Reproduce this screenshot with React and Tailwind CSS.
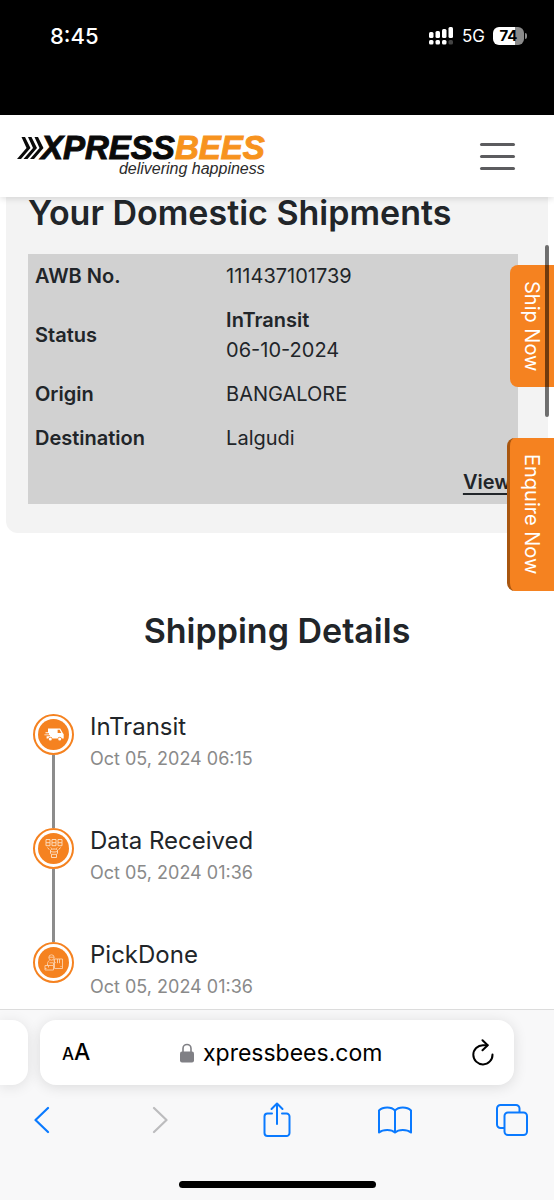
import { useState } from "react";

const shipment = {
    awb: "111437101739",
    status: "InTransit",
    statusDate: "06-10-2024",
    origin: "BANGALORE",
    destination: "Lalgudi",
};

const events = [
    { title: "InTransit", time: "Oct 05, 2024 06:15", Icon: VanIcon },
    { title: "Data Received", time: "Oct 05, 2024 01:36", Icon: DataIcon },
    { title: "PickDone", time: "Oct 05, 2024 01:36", Icon: PickupIcon },
];

function VanIcon() {
    return (
        <svg viewBox="0 0 20 13" className="w-5 h-[13px]" fill="#fff" aria-hidden="true">
            <path d="M4 .5h12.2l2.6 4.6.9 1.2v4.2h-1.9a2.1 2.1 0 0 0-4.1 0H8.4a2.1 2.1 0 0 0-4.1 0H2.6V8.2H6V7.3H.5l-.2-.9H5V5.3H1.5V4.2H4z" />
            <path d="M13.6 1.8h2l1.700 3.200h-3.700z" fill="#f58220" />
            <circle cx="6.3" cy="11" r="1.5" />
            <circle cx="15.7" cy="11" r="1.5" />
        </svg>
    );
}

function DataIcon() {
    return (
        <svg viewBox="0 0 18 21" className="w-[18px] h-[21px]" fill="none" stroke="#fde3cb" strokeWidth=".9" aria-hidden="true">
            <path d="M1 1.5h4v3.2H1zM7 1.5h4v3.2H7zM13 1.5h4v3.2h-4z" />
            <path d="M1 4.7v3h4v-3M7 4.7v3h4v-3M13 4.7v3h4v-3" />
            <path d="M2.5 9.5l1.8 2.2M15.5 9.5l-1.8 2.2M5.8 9.5l.8 1.2M12.2 9.5l-.8 1.2" />
            <path d="M5.5 12.5c0-1 1.5-1.5 3.5-1.5s3.5.5 3.5 1.5-1.5 1.5-3.5 1.5-3.5-.5-3.5-1.5zM5.5 12.5v2.8l1 1v3.2h5v-3.2l1-1v-2.8M6.5 16.3h5" />
        </svg>
    );
}

function PickupIcon() {
    return (
        <svg viewBox="0 0 20 17" className="w-5 h-[17px]" fill="none" stroke="#fcd3ae" strokeWidth=".9" aria-hidden="true">
            <circle cx="7.5" cy="3.5" r="2.7" />
            <path d="M5 3.2h5M5.5 6.5c-1.8.8-2.2 2.5-2 5M9.5 6.5l2 2.5" />
            <path d="M10.5 5h8v9.5h-8zM13.5 5v4.2M15.5 5v4.2M16.5 12.5h1" />
            <path d="M1 11.5h8.5V16H1zM5.5 8.8h4v2.7M4.5 11.5v2M1 14.5h1.5" />
        </svg>
    );
}

function StatusBar() {
    return (
        <div className="h-[115px] bg-black text-white flex items-start justify-between pl-[50px] pr-[27px] pt-6">
            <span className="text-[22px] leading-6 font-medium">8:45</span>
            <div className="flex items-center h-6 gap-2">
                <svg viewBox="0 0 25 18" className="w-[25px] h-[18px]" fill="#fff" aria-hidden="true">
                    <rect x="0" y="5" width="4.5" height="6" rx="1.5" />
                    <rect x="6.5" y="4" width="4.5" height="7" rx="1.5" />
                    <rect x="13" y="2" width="4.5" height="9" rx="1.5" />
                    <rect x="19.5" y="0" width="4.5" height="11" rx="1.5" />
                    <rect x="0" y="13" width="4.5" height="4.5" rx="1.5" />
                    <rect x="6.5" y="13" width="4.5" height="4.5" rx="1.5" />
                    <rect x="13" y="13" width="4.5" height="4.5" rx="1.5" />
                    <rect x="19.5" y="13" width="4.5" height="4.5" rx="1.5" fill="#444" />
                </svg>
                <span className="text-[17px] leading-6">5G</span>
                <div className="flex items-center gap-px">
                    <div className="w-[31px] h-[18px] rounded-[6px] bg-linear-to-r from-white from-72% to-[#8a8a8a] to-72% text-black text-[15px] leading-[18px] font-bold text-center">
                        74
                    </div>
                    <div className="w-[2px] h-[6px] rounded-r-full bg-[#8a8a8a]" />
                </div>
            </div>
        </div>
    );
}

function Logo() {
    return (
        <a href="/" aria-label="XpressBees home" className="flex flex-col items-end font-['Liberation_Sans',sans-serif] italic">
            <span className="flex items-center text-[33px] leading-6 font-bold">
                <svg viewBox="0 0 28 22" className="w-7 h-[22px] -mr-1" fill="#0a0a0a" aria-hidden="true">
                    <path d="M4.5 0H8l5.500 11L4 22H0l9.500-11z" />
                    <path d="M11 0h3.500L20 11l-9.500 11h-4L16 11z" />
                    <path d="M17.500 0H21l5.500 11L17 22h-4l9.500-11z" />
                </svg>
                <span className="text-[#0a0a0a] [-webkit-text-stroke:1px_#0a0a0a]">XPRESS</span>
                <span className="text-[#f7931e] [-webkit-text-stroke:1px_#f7931e]">BEES</span>
            </span>
            <span className="mt-px text-base leading-4 text-[#2b2b2b]">delivering happiness</span>
        </a>
    );
}

function Header() {
    const [open, setOpen] = useState(false);

    return (
        <header className="relative z-10 h-[82px] bg-white flex items-center justify-between pl-[17px] pr-[39px] shadow-[0_2px_6px_rgba(0,0,0,0.12)]">
            <Logo />
            <button
                type="button"
                aria-label="Menu"
                aria-expanded={open}
                onClick={() => setOpen(!open)}
                className="flex flex-col gap-[9px]"
            >
                <span className="w-[35px] h-[3px] rounded-full bg-[#5c5c5f]" />
                <span className="w-[35px] h-[3px] rounded-full bg-[#5c5c5f]" />
                <span className="w-[35px] h-[3px] rounded-full bg-[#5c5c5f]" />
            </button>
        </header>
    );
}

function ShipmentCard() {
    return (
        <section className="mx-[6px] pl-[22px] pr-[30px] pb-[29px] bg-[#f3f3f3] rounded-b-xl">
            <h1 className="text-[34px] leading-8 font-semibold whitespace-nowrap">Your Domestic Shipments</h1>
            <table className="mt-[25px] w-full table-fixed bg-[#d1d1d1] text-xl leading-[30px] text-left">
                <tbody>
                    <tr>
                        <th scope="row" className="w-[39%] p-[7px] font-semibold">AWB No.</th>
                        <td className="p-[7px]">{shipment.awb}</td>
                    </tr>
                    <tr>
                        <th scope="row" className="p-[7px] font-semibold">Status</th>
                        <td className="p-[7px]">
                            <strong className="block font-semibold">{shipment.status}</strong>
                            {shipment.statusDate}
                        </td>
                    </tr>
                    <tr>
                        <th scope="row" className="p-[7px] font-semibold">Origin</th>
                        <td className="p-[7px]">{shipment.origin}</td>
                    </tr>
                    <tr>
                        <th scope="row" className="p-[7px] font-semibold">Destination</th>
                        <td className="p-[7px]">{shipment.destination}</td>
                    </tr>
                    <tr>
                        <td colSpan={2} className="p-[7px] text-right">
                            <a href="#details" className="font-semibold underline underline-offset-4">View</a>
                        </td>
                    </tr>
                </tbody>
            </table>
        </section>
    );
}

function Timeline() {
    return (
        <section id="details" className="pt-[78px] px-[33px]">
            <h2 className="text-[34px] leading-10 font-semibold text-center">Shipping Details</h2>
            <ol className="mt-[63px]">
                {events.map(({ title, time, Icon }, i) => (
                    <li key={title} className="flex gap-4">
                        <div className="flex flex-col items-center">
                            <div className="w-[41px] h-[41px] rounded-full border-2 border-[#f58220] bg-white p-[3px]">
                                <div className="w-full h-full rounded-full bg-[#f58220] flex items-center justify-center">
                                    <Icon />
                                </div>
                            </div>
                            {i < events.length - 1 && <div className="w-[3px] h-[73px] bg-[#8c8c8c]" />}
                        </div>
                        <div>
                            <h3 className="text-2xl leading-[26px]">{title}</h3>
                            <p className="mt-[5px] text-lg leading-7 text-[#8a8a8a]">{time}</p>
                        </div>
                    </li>
                ))}
            </ol>
        </section>
    );
}

function SideTabs() {
    return (
        <div className="absolute z-20 right-0 top-[68px] flex flex-col items-end gap-[51px] text-xl text-white">
            <button type="button" className="w-11 h-[122px] rounded-l-lg bg-[#f58220] [writing-mode:vertical-rl] text-center">
                Ship Now
            </button>
            <button
                type="button"
                className="w-[47px] h-[153px] rounded-l-lg border-l-3 border-[#a9560f] bg-[#f58220] [writing-mode:vertical-rl] text-center"
            >
                Enquire Now
            </button>
        </div>
    );
}

function BrowserBar() {
    return (
        <footer className="relative z-20 bg-[#f8f8f9] border-t border-[#dcdcdc] pt-[10px] pb-3 overflow-hidden">
            <div className="flex gap-3">
                <div className="w-7 h-[65px] rounded-r-2xl bg-white shadow-[0_2px_14px_rgba(0,0,0,0.1)]" />
                <div className="flex-1 h-[65px] mr-10 pl-[22px] pr-5 rounded-2xl bg-white shadow-[0_2px_14px_rgba(0,0,0,0.12)] flex items-center justify-between text-black">
                    <button type="button" aria-label="Page settings" className="flex items-baseline font-medium">
                        <span className="text-[17px]">A</span>
                        <span className="text-[23px]">A</span>
                    </button>
                    <label className="flex items-center gap-[9px]">
                        <svg viewBox="0 0 14 20" className="w-[14px] h-5" aria-label="Secure">
                            <rect x="0" y="8.5" width="14" height="11" rx="2" fill="#808085" />
                            <path d="M3 9V5.5a4 4 0 0 1 8 0V9" fill="none" stroke="#808085" strokeWidth="1.6" />
                        </svg>
                        <input
                            type="text"
                            aria-label="Address"
                            defaultValue="xpressbees.com"
                            className="field-sizing-content text-[23px] leading-8 outline-none"
                        />
                    </label>
                    <button type="button" aria-label="Reload">
                        <svg viewBox="0 0 22 27" className="w-[22px] h-[27px]" fill="none" stroke="#000" strokeWidth="2" strokeLinecap="round" strokeLinejoin="round">
                            <path d="M20.5 15.5A9.6 9.6 0 1 1 11 6.2h4.500" />
                            <path d="M10.5 1.2l5.200 5-5.200 5" />
                        </svg>
                    </button>
                </div>
            </div>
            <nav className="mt-[17px] px-[26px] flex justify-between text-[#0a7aff]">
                <button type="button" aria-label="Back" className="w-8 h-9 flex items-center justify-center">
                    <svg viewBox="0 0 16 28" className="w-4 h-7" fill="none" stroke="currentColor" strokeWidth="2.2" strokeLinecap="round" strokeLinejoin="round">
                        <path d="M14 2L1.5 14 14 26" />
                    </svg>
                </button>
                <button type="button" aria-label="Forward" disabled className="w-8 h-9 flex items-center justify-center text-[#bcbcbe]">
                    <svg viewBox="0 0 16 28" className="w-4 h-7" fill="none" stroke="currentColor" strokeWidth="2.2" strokeLinecap="round" strokeLinejoin="round">
                        <path d="M2 2l12.5 12L2 26" />
                    </svg>
                </button>
                <button type="button" aria-label="Share" className="w-8 h-9 flex items-center justify-center">
                    <svg viewBox="0 0 28 36" className="w-7 h-9" fill="none" stroke="currentColor" strokeWidth="2" strokeLinecap="round" strokeLinejoin="round">
                        <path d="M9 11.5H4.500a3 3 0 0 0-3 3V31a3 3 0 0 0 3 3h19a3 3 0 0 0 3-3V14.5a3 3 0 0 0-3-3H19" />
                        <path d="M14 22V1.500M8.500 7L14 1.500 19.500 7" />
                    </svg>
                </button>
                <button type="button" aria-label="Bookmarks" className="w-8 h-9 flex items-center justify-center">
                    <svg viewBox="0 0 34 28" className="w-[34px] h-7 shrink-0" fill="none" stroke="currentColor" strokeWidth="2" strokeLinejoin="round">
                        <path d="M17 4.5C13.500.5 5 .5 1 4.500V26.500c4-3.500 12.500-3.500 16 0 3.500-3.500 12-3.500 16 0V4.500c-4-4-12.500-4-16 0z" />
                        <path d="M17 4.5v22" />
                    </svg>
                </button>
                <button type="button" aria-label="Tabs" className="w-8 h-9 flex items-center justify-center">
                    <svg viewBox="0 0 32 32" className="w-8 h-8" fill="none" stroke="currentColor" strokeWidth="2">
                        <rect x="8.5" y="8.5" width="22.5" height="22.5" rx="3.5" />
                        <path d="M8.5 24H4.500A3.500 3.500 0 0 1 1 20.500v-16A3.500 3.500 0 0 1 4.500 1h15.500A3.500 3.500 0 0 1 23.500 4.500v4" />
                    </svg>
                </button>
            </nav>
            <div className="mt-[43px] mx-auto w-[197px] h-[7px] rounded-full bg-black" />
        </footer>
    );
}

export default function App() {
    return (
        <div className="min-h-screen flex flex-col bg-white text-[#212529] font-['Inter',sans-serif]">
            <StatusBar />
            <Header />
            <main className="relative flex-1">
                <ShipmentCard />
                <Timeline />
                <SideTabs />
                {/* scroll indicator */}
                <div className="absolute z-30 right-[5px] top-12 w-1 h-[172px] rounded-full bg-black/55" />
            </main>
            <BrowserBar />
        </div>
    );
}
